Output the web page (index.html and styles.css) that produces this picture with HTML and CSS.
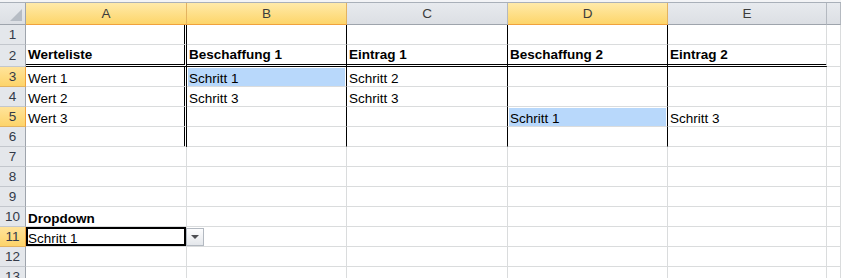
FILE: index.html
```html
<!DOCTYPE html>
<html lang="de">
<head>
  <meta charset="UTF-8" />
  <title>Werteliste</title>
  <link rel="stylesheet" href="styles.css">
</head>
<body>
  <div class="topbar"></div>
  <table class="sheet">
    <colgroup>
      <col class="w-rh"><col class="w-a"><col class="w-b"><col class="w-c"><col class="w-d"><col class="w-e"><col class="w-f">
    </colgroup>
    <tr class="head">
      <th class="corner"><span class="tri"></span></th>
      <th class="sel">A</th><th class="sel">B</th><th>C</th><th class="sel">D</th><th>E</th><th></th>
    </tr>
    <tr>
      <th class="rh">1</th>
      <td class="dbl-r"></td><td class="blk-r"></td><td class="blk-r"></td><td class="blk-r"></td><td></td><td></td>
    </tr>
    <tr class="tall">
      <th class="rh">2</th>
      <td class="dbl-r dbl-b b">Werteliste</td><td class="blk-r dbl-b b">Beschaffung 1</td><td class="blk-r dbl-b b">Eintrag 1</td><td class="blk-r dbl-b b">Beschaffung 2</td><td class="dbl-b b">Eintrag 2</td><td></td>
    </tr>
    <tr>
      <th class="rh sel">3</th>
      <td class="dbl-r">Wert 1</td><td class="blk-r hl">Schritt 1</td><td class="blk-r">Schritt 2</td><td class="blk-r"></td><td></td><td></td>
    </tr>
    <tr>
      <th class="rh">4</th>
      <td class="dbl-r">Wert 2</td><td class="blk-r">Schritt 3</td><td class="blk-r">Schritt 3</td><td class="blk-r"></td><td></td><td></td>
    </tr>
    <tr>
      <th class="rh sel">5</th>
      <td class="dbl-r">Wert 3</td><td class="blk-r"></td><td class="blk-r"></td><td class="blk-r hl">Schritt 1</td><td>Schritt 3</td><td></td>
    </tr>
    <tr>
      <th class="rh">6</th>
      <td class="dbl-r"></td><td class="blk-r"></td><td class="blk-r"></td><td class="blk-r"></td><td></td><td></td>
    </tr>
    <tr>
      <th class="rh">7</th>
      <td></td><td></td><td></td><td></td><td></td><td></td>
    </tr>
    <tr>
      <th class="rh">8</th>
      <td></td><td></td><td></td><td></td><td></td><td></td>
    </tr>
    <tr>
      <th class="rh">9</th>
      <td></td><td></td><td></td><td></td><td></td><td></td>
    </tr>
    <tr>
      <th class="rh">10</th>
      <td class="b">Dropdown</td><td></td><td></td><td></td><td></td><td></td>
    </tr>
    <tr>
      <th class="rh sel">11</th>
      <td class="active">Schritt 1<span class="dd-btn"><span class="arrow"></span></span></td><td></td><td></td><td></td><td></td><td></td>
    </tr>
    <tr>
      <th class="rh">12</th>
      <td></td><td></td><td></td><td></td><td></td><td></td>
    </tr>
    <tr>
      <th class="rh">13</th>
      <td></td><td></td><td></td><td></td><td></td><td></td>
    </tr>
  </table>
</body>
</html>
```

FILE: styles.css
```css
body {
  margin: 0;
  background: #fff;
  font-family: "Liberation Sans", Arial, sans-serif;
  overflow: hidden;
}
.topbar {
  height: 2px;
  background: #f3f4f6;
  border-bottom: 1px solid #a9b0b9;
}
.sheet {
  border-collapse: separate;
  border-spacing: 0;
  table-layout: fixed;
  width: 841px;
}
.w-rh { width: 26px; }
.w-a { width: 161px; }
.w-b { width: 160px; }
.w-c { width: 161px; }
.w-d { width: 160px; }
.w-e { width: 159px; }
.w-f { width: 14px; }

.sheet tr { height: 20px; }
.sheet tr.head { height: 22px; }
.sheet tr.tall { height: 22px; }
.sheet td, .sheet th {
  box-sizing: border-box;
  padding: 0 2px;
  font-size: 13.5px;
  line-height: 15px;
  white-space: nowrap;
  font-weight: normal;
}
.sheet td {
  vertical-align: bottom;
  color: #000;
  border-right: 1px solid #dadcdd;
  border-bottom: 1px solid #dadcdd;
}

/* column headers */
.head th {
  color: #3b3b3b;
  text-align: center;
  vertical-align: middle;
  background: linear-gradient(#e7eaee, #dcdfe4);
  border-right: 1px solid #b4b9c0;
  border-bottom: 1px solid #9ea4ac;
}
.head th.sel {
  background: linear-gradient(#ffeaa9, #fdd56a);
  border-bottom-color: #f0a23c;
  border-right-color: #e3b360;
}
.head th.corner {
  position: relative;
  border-right-color: #9ea4ac;
}
.tri {
  position: absolute;
  right: 3px;
  bottom: 3px;
  width: 0;
  height: 0;
  border-left: 12px solid transparent;
  border-bottom: 12px solid #b6bcc4;
}

/* row headers */
.rh {
  color: #333a48;
  text-align: center;
  vertical-align: middle;
  background: #e4e7eb;
  border-right: 1px solid #9ea4ac;
  border-bottom: 1px solid #c3c7cd;
}
.rh.sel {
  background: linear-gradient(#ffe39a, #fdd46a);
  border-right-color: #f0a23c;
  border-bottom-color: #e3b360;
}

/* cell formats */
.b { font-weight: bold !important; }
.dbl-r { border-right: 3px double #000 !important; }
.blk-r { border-right: 1px solid #000 !important; }
.dbl-b { border-bottom: 3px double #000 !important; }
.tall td { padding-bottom: 2px; }
.hl {
  background: #b8d8fb;
  box-shadow: inset 1px 1px #fff, inset -1px 0 #fff;
}

/* active cell with list dropdown */
.active {
  position: relative;
  box-shadow: inset 0 0 0 2px #000;
}
.dd-btn {
  position: absolute;
  left: 100%;
  top: 1px;
  width: 16px;
  height: 16px;
  border: 1px solid #b3b9c1;
  background: linear-gradient(#fdfdfe, #e4e7eb);
  display: flex;
  align-items: center;
  justify-content: center;
}
.arrow {
  width: 0;
  height: 0;
  border-left: 4px solid transparent;
  border-right: 4px solid transparent;
  border-top: 4px solid #4d4f53;
}
```
